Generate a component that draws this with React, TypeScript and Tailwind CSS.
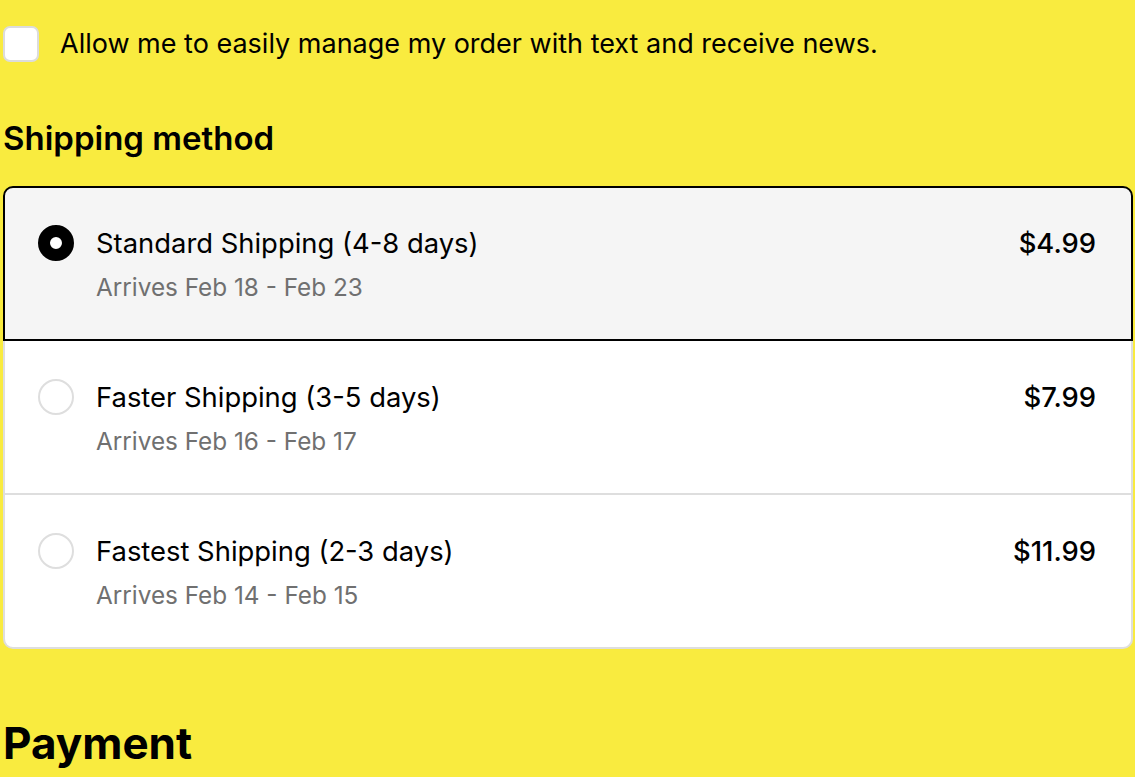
import React from "react";

const rates = [
  { title: "Standard Shipping (4-8 days)", sub: "Arrives Feb 18 - Feb 23", price: "$4.99" },
  { title: "Faster Shipping (3-5 days)", sub: "Arrives Feb 16 - Feb 17", price: "$7.99" },
  { title: "Fastest Shipping (2-3 days)", sub: "Arrives Feb 14 - Feb 15", price: "$11.99" },
];

export default function App() {
  return (
    <div
      className="min-h-screen bg-[#f9eb3f] pl-[3px] pr-[2px] pt-[26px] text-black"
      style={{ fontFamily: "Inter, 'Noto Sans', sans-serif" }}
    >
      <label className="flex items-center gap-[21px]">
        <span className="h-[36px] w-[36px] shrink-0 rounded-[7px] border-2 border-[#dcdcdc] bg-white" />
        <span className="text-[27px] leading-[36px]">
          Allow me to easily manage my order with text and receive news.
        </span>
      </label>

      <h2 className="mt-[57px] text-[33px] font-semibold leading-[38px]">Shipping method</h2>

      <div className="mt-[29px] flex flex-col">
        {rates.map((r, i) => {
          const selected = i === 0;
          return (
            <div
              key={r.title}
              className={
                selected
                  ? "flex items-start rounded-t-[10px] border-2 border-black bg-[#f5f5f5] pb-[34px] pl-[33px] pr-[35px] pt-[34px]"
                  : i === rates.length - 1
                  ? "flex items-start rounded-b-[10px] border-x-2 border-b-2 border-[#dedede] bg-white pb-[34px] pl-[33px] pr-[35px] pt-[35px]"
                  : "flex items-start border-x-2 border-b-2 border-[#dedede] bg-white pb-[34px] pl-[33px] pr-[35px] pt-[35px]"
              }
            >
              <div className="flex h-[42px] items-center">
                {selected ? (
                  <span className="h-[36px] w-[36px] rounded-full border-[12px] border-black bg-white" />
                ) : (
                  <span className="h-[36px] w-[36px] rounded-full border-2 border-[#dedede] bg-white" />
                )}
              </div>
              <div className="ml-[22px] flex-1">
                <div className="text-[27.4px] leading-[42px]">{r.title}</div>
                <div className="mt-[5px] text-[24.3px] leading-[36px] text-[#707070]">{r.sub}</div>
              </div>
              <div className="text-[27.4px] font-medium leading-[42px]">{r.price}</div>
            </div>
          );
        })}
      </div>

      <h2 className="mt-[68px] text-[44px] font-bold leading-[52px]">Payment</h2>
    </div>
  );
}
